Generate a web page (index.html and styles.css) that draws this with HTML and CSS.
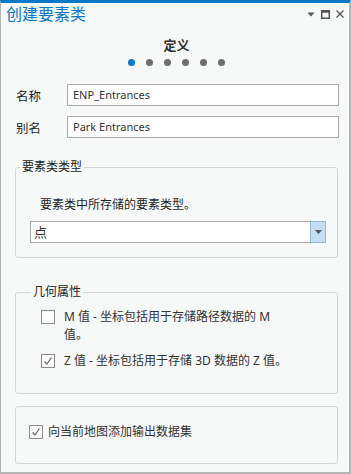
FILE: index.html
```html
<!DOCTYPE html>
<html>
<head>
    <title>创建要素类</title>
    <meta charset="utf-8">
    <link rel="stylesheet" href="styles.css">
</head>
<body>
    <div class="panel">
        <div class="header">
            <span class="title">创建要素类</span>
            <div class="win-icons">
                <svg width="8" height="5" viewBox="0 0 8 5"><path d="M0.5 0.5h7L4 4.5z" fill="#555"/></svg>
                <svg width="9" height="9" viewBox="0 0 9 9"><rect x="0.75" y="0.75" width="7.5" height="7.5" fill="none" stroke="#555" stroke-width="1.5"/><rect x="0.75" y="0.75" width="7.5" height="2" fill="#555"/></svg>
                <svg width="8" height="8" viewBox="0 0 8 8"><path d="M0.5 0.5l7 7M7.5 0.5l-7 7" stroke="#555" stroke-width="1.3"/></svg>
            </div>
        </div>

        <div class="step">定义</div>
        <div class="dots">
            <span class="dot active"></span>
            <span class="dot"></span>
            <span class="dot"></span>
            <span class="dot"></span>
            <span class="dot"></span>
            <span class="dot"></span>
        </div>

        <div class="form-group">
            <label>名称</label>
            <div class="input">ENP_Entrances</div>
        </div>
        <div class="form-group">
            <label>别名</label>
            <div class="input">Park Entrances</div>
        </div>

        <fieldset class="group type-group">
            <legend>要素类类型</legend>
            <div class="desc">要素类中所存储的要素类型。</div>
            <div class="select">
                <span class="select-text">点</span>
                <span class="select-btn">
                    <svg width="7" height="4" viewBox="0 0 7 4"><path d="M0 0h7L3.5 4z" fill="#555"/></svg>
                </span>
            </div>
        </fieldset>

        <fieldset class="group geo-group">
            <legend>几何属性</legend>
            <div class="check-row">
                <span class="box"></span>
                <span class="check-text">M 值 - 坐标包括用于存储路径数据的 M 值。</span>
            </div>
            <div class="check-row">
                <span class="box">
                    <svg width="12" height="12" viewBox="0 0 12 12"><path d="M2.5 6.5l2.5 2.5 4.5-6.5" fill="none" stroke="#6b6b6b" stroke-width="1.3"/></svg>
                </span>
                <span class="check-text">Z 值 - 坐标包括用于存储 3D 数据的 Z 值。</span>
            </div>
        </fieldset>

        <fieldset class="group add-group">
            <div class="check-row">
                <span class="box">
                    <svg width="12" height="12" viewBox="0 0 12 12"><path d="M2.5 6.5l2.5 2.5 4.5-6.5" fill="none" stroke="#6b6b6b" stroke-width="1.3"/></svg>
                </span>
                <span class="check-text">向当前地图添加输出数据集</span>
            </div>
        </fieldset>
    </div>
</body>
</html>
```

FILE: styles.css
```css
body {
    margin: 0;
    font-family: "Noto Sans", "Noto Sans CJK SC", sans-serif;
    font-size: 12px;
    color: #1f1f1f;
}
.panel {
    width: 351px;
    height: 474px;
    box-sizing: border-box;
    background-color: #f7f8f8;
    border-top: 3px solid #0a79c8;
    border-left: 1px solid #b5b5b5;
    border-right: 2px solid #b5b5b5;
    border-bottom: 2px solid #b5b5b5;
    padding: 0 11px 0 14px;
}
.header {
    display: flex;
    align-items: center;
    justify-content: space-between;
    height: 22px;
    margin: 0 0 0 -9px;
}
.title {
    color: #0a79c8;
    font-size: 16px;
    line-height: 22px;
}
.win-icons {
    display: flex;
    align-items: center;
    gap: 6px;
    margin-right: -6px;
}
.step {
    text-align: center;
    font-weight: bold;
    font-size: 13px;
    color: #333;
    margin-top: 11px;
    line-height: 18px;
}
.dots {
    display: flex;
    justify-content: center;
    gap: 11px;
    margin-top: 5px;
    padding-right: 1px;
}
.dot {
    width: 7px;
    height: 7px;
    border-radius: 50%;
    background-color: #6e6e6e;
}
.dot.active {
    background-color: #0a79c8;
}
.form-group {
    display: flex;
    align-items: center;
    margin-top: 18px;
}
.form-group + .form-group {
    margin-top: 10px;
}
.form-group label {
    width: 51px;
    padding-left: 1px;
    font-size: 12.5px;
}
.input {
    flex: 1;
    height: 22px;
    box-sizing: border-box;
    border: 1px solid #a9a9a9;
    background: #fff;
    padding-left: 5px;
    line-height: 20px;
    font-size: 11px;
    color: #333;
    margin-right: -1px;
}
.group {
    border: 1px solid #d5d5d5;
    border-radius: 3px;
    margin: 0;
    padding: 0 11px 0 14px;
}
.group legend {
    padding: 0 2px;
    margin-left: -10px;
    font-size: 12px;
    color: #222;
    line-height: 16px;
}
.type-group {
    margin-top: 21px;
    height: 99px;
    box-sizing: border-box;
}
.desc {
    margin-top: 21px;
    padding-left: 10px;
    font-size: 12px;
    line-height: 18px;
}
.select {
    display: flex;
    height: 22px;
    box-sizing: border-box;
    border: 1px solid #a9a9a9;
    background: #fff;
    margin-top: 7px;
}
.select-text {
    flex: 1;
    padding-left: 3px;
    line-height: 20px;
    font-size: 13px;
    color: #333;
}
.select-btn {
    width: 14px;
    margin: -1px -1px -1px 0;
    border: 1px solid #91badd;
    background: #c7ddf1;
    display: flex;
    align-items: center;
    justify-content: center;
}
.geo-group {
    margin-top: 26px;
    height: 110px;
    box-sizing: border-box;
    padding-left: 25px;
    padding-top: 8px;
}
.check-row {
    display: flex;
    align-items: flex-start;
    gap: 9px;
    margin-bottom: 8px;
}
.box {
    width: 14px;
    height: 14px;
    box-sizing: border-box;
    border: 1px solid #8a8a8a;
    background: #fff;
    flex-shrink: 0;
    display: flex;
    align-items: center;
    justify-content: center;
    margin-top: 2px;
}
.check-text {
    max-width: 232px;
    font-size: 12px;
    line-height: 18px;
    color: #333;
}
.add-group {
    margin-top: 12px;
    height: 58px;
    box-sizing: border-box;
    padding: 16px 0 0 13px;
}
.add-group .check-row {
    gap: 5px;
}
```
